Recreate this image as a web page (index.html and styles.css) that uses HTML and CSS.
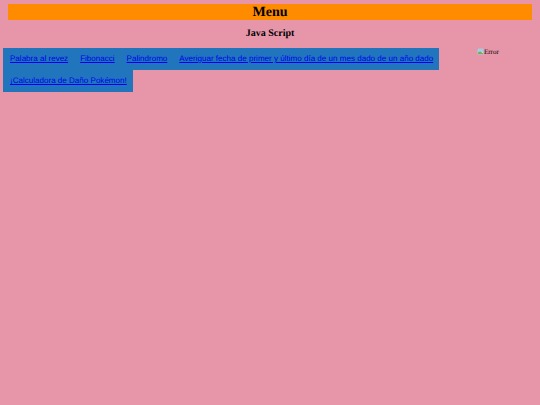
FILE: index.html
```html
<!DOCTYPE html>
<html lang="es">

<head>
    <meta charset="UTF-8">
    <meta name="viewport" content="width=device-width, initial-scale=1.0">
    <title>Menu</title>
    <link rel="stylesheet" href="styles.css">
</head>

<body>
    <h1 class="title">Menu</h1>
    <h3 class="subtitle">Java Script</h3>

    <div class="content">
        <ul class="menu">
            <li class="menu-row">
                <a href="#">Palabra al revez</a>
                <a href="#">Fibonacci</a>
                <a href="#">Palindromo</a>
                <a href="#">Averiguar fecha de primer y último día de un mes dado de un año dado</a>
            </li>
            <li class="menu-row">
                <a href="#">¡Calculadora de Daño Pokémon!</a>
            </li>
        </ul>

        <div class="broken-image">
            <svg class="broken-icon" width="7" height="7" viewBox="0 0 7 7" xmlns="http://www.w3.org/2000/svg">
                <rect x="0.5" y="0.5" width="6" height="6" fill="#f4f6f4" stroke="#a9a9a9" stroke-width="0.6"/>
                <path d="M1 1h5v3L1 5z" fill="#a9c8ea"/>
                <path d="M1 6V4.6L3 3.6l3 1.4V6z" fill="#6fae5a"/>
            </svg>
            <span>Error</span>
        </div>
    </div>
</body>

</html>
```

FILE: styles.css
```css
body {
    margin: 0;
    padding: 4px 8px 0;
    background: #e795a9;
    font-family: "Liberation Serif", serif;
    color: #000;
    text-rendering: geometricPrecision;
}

.title {
    margin: 0;
    height: 16px;
    background: #ff8c00;
    font-size: 14px;
    line-height: 17px;
    text-align: center;
}

.subtitle {
    margin: 0;
    padding-top: 7px;
    font-size: 10px;
    line-height: 13px;
    text-align: center;
}

.content {
    display: flex;
    margin: 8px 0 0 -5px;
}

.menu {
    margin: 0;
    padding: 0;
    list-style: none;
    width: 474px;
    font-family: "Liberation Sans", sans-serif;
    font-size: 8.05px;
}

.menu-row {
    display: flex;
    width: fit-content;
    padding-left: 1px;
    background: #2175bd;
    white-space: nowrap;
}

.menu-row a {
    padding: 0 6px;
    line-height: 22px;
    color: #0000ee;
}

.broken-image {
    display: flex;
    align-items: flex-start;
    font-size: 7px;
    line-height: 7px;
}

.broken-icon {
    display: block;
}

.broken-image span {
    padding-top: 1px;
}
```
